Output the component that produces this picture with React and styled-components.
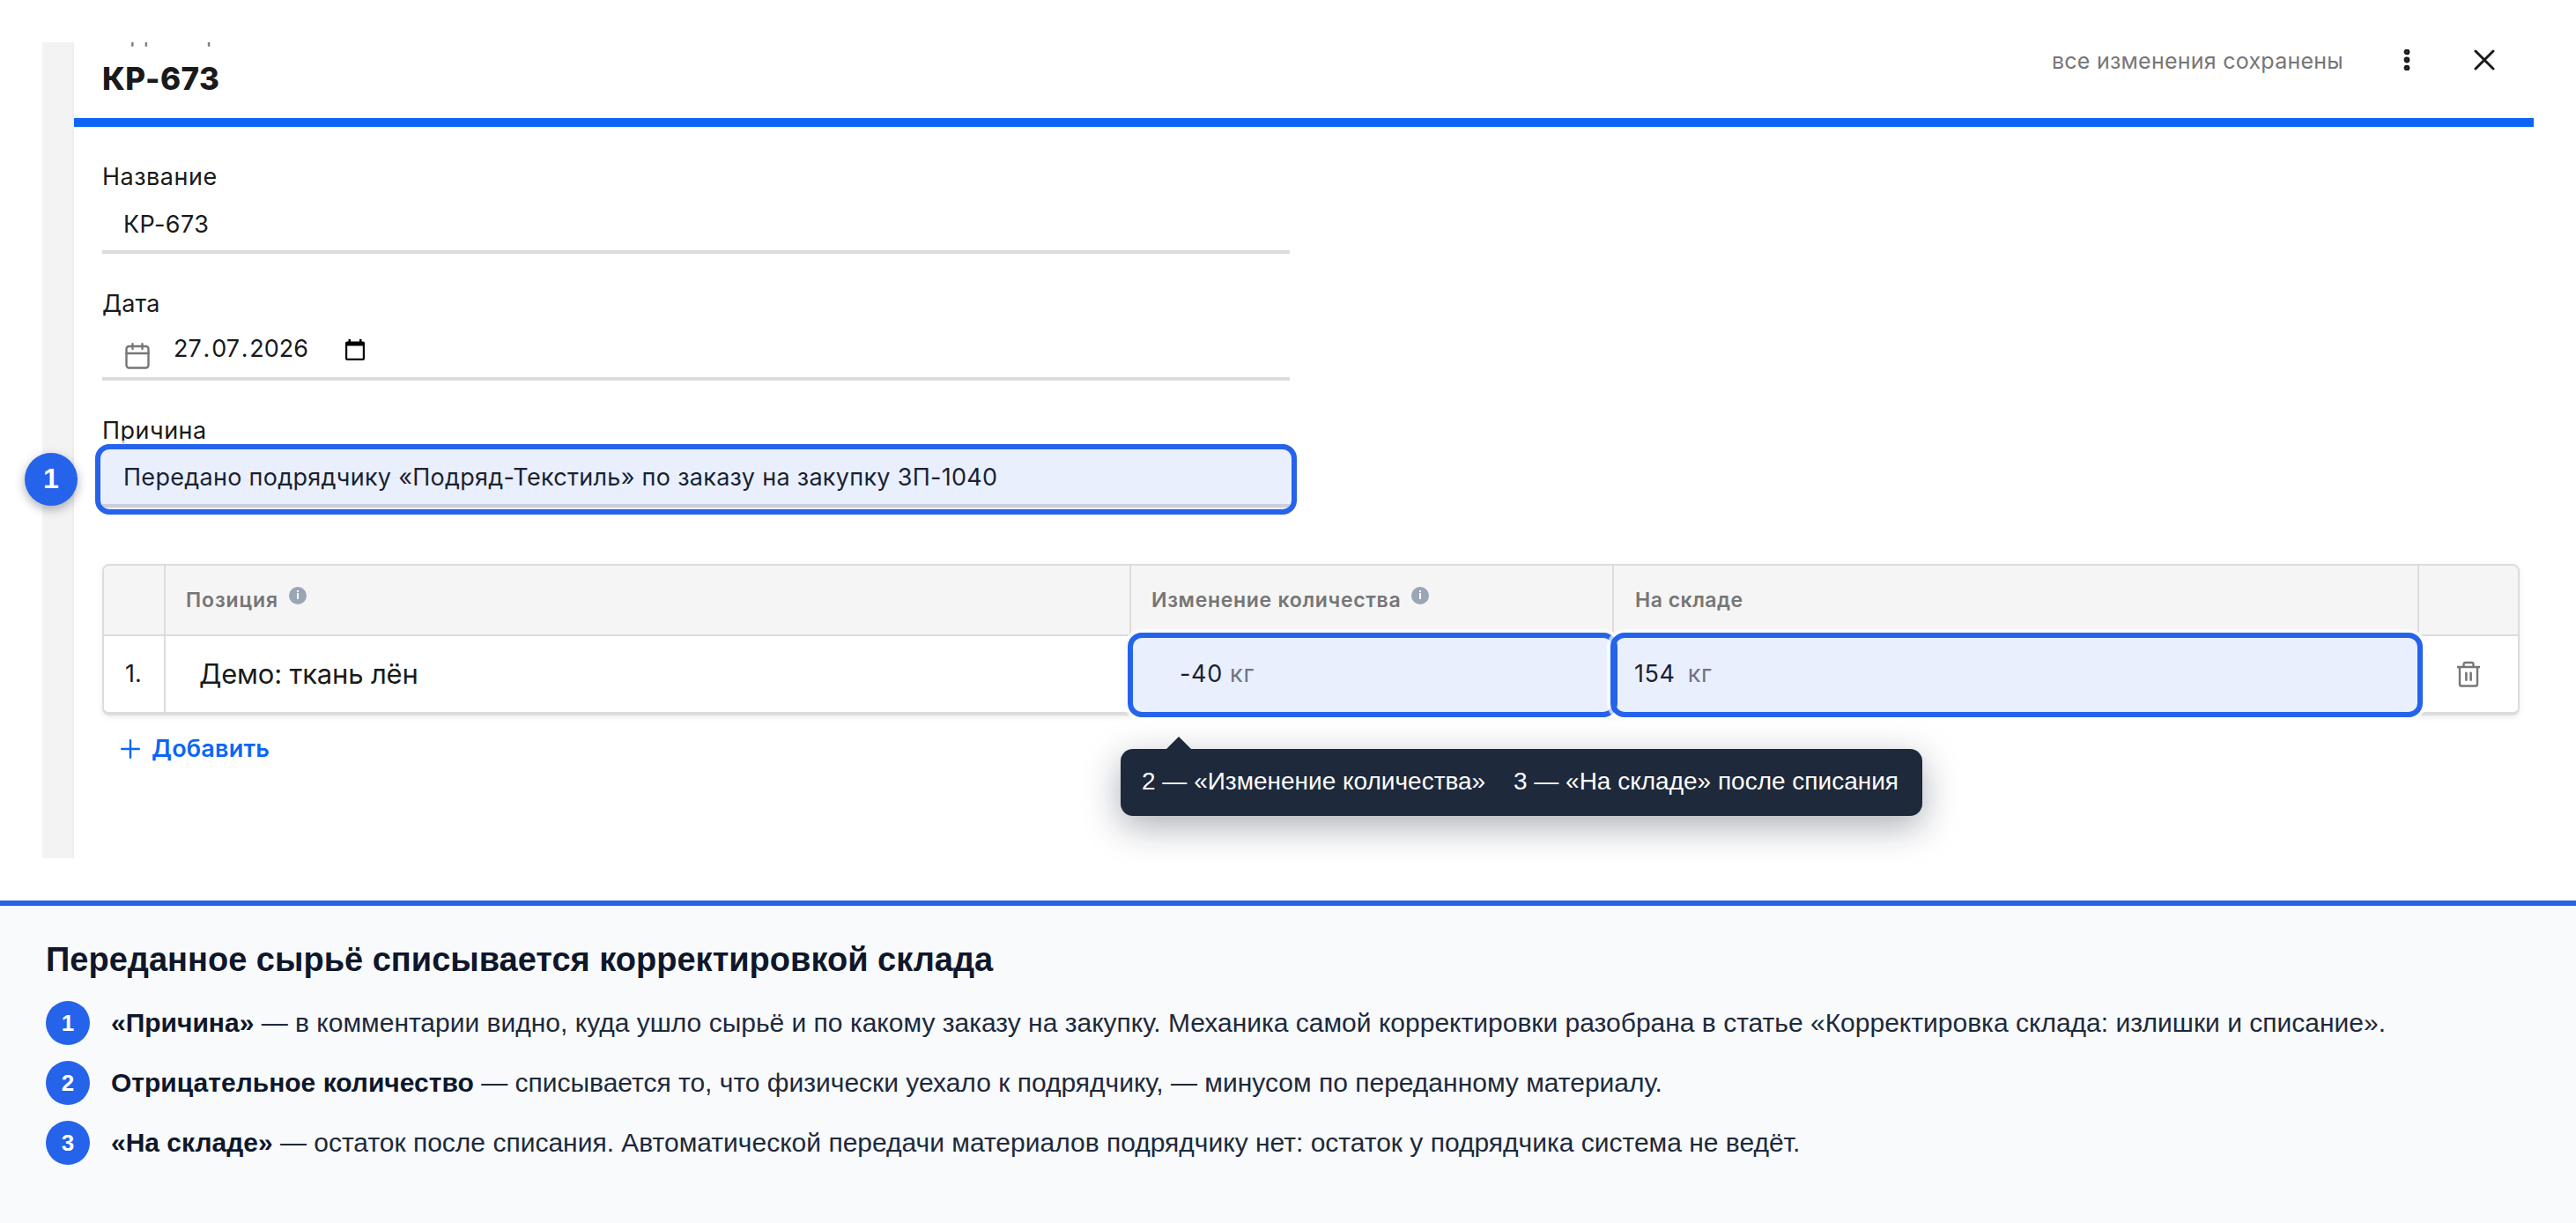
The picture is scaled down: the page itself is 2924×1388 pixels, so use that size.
import styled, { createGlobalStyle } from 'styled-components';

const GlobalStyle = createGlobalStyle`
    * {
        box-sizing: border-box;
    }

    body {
        margin: 0;
        background: #fff;
        font-family: Inter, Roboto, sans-serif;
        color: #1a1a1a;
    }
`;

const Page = styled.div`
    width: 2924px;
    height: 1388px;
    display: flex;
    flex-direction: column;
    overflow: hidden;
`;

const Shot = styled.div`
    height: 1022px;
    flex: none;
    padding: 48px;
`;

const Backdrop = styled.div`
    height: 926px;
    padding-left: 36px;
    background: linear-gradient(to right, #f3f3f3 33px, #ebebeb 36px);
`;

const Panel = styled.div`
    height: 100%;
    background: #fff;
`;

const Header = styled.header`
    height: 96px;
    padding: 0 44px 0 32px;
    display: flex;
    justify-content: space-between;
    align-items: flex-start;
    border-bottom: 10px solid #0b66f5;
    overflow: hidden;
`;

const Kind = styled.div`
    margin-top: -25px;
    font-size: 25px;
    line-height: 32px;
    letter-spacing: 0.2px;
    color: #767676;
`;

const Title = styled.h1`
    margin: 14px 0 0;
    font-size: 35px;
    line-height: 40px;
    font-weight: 800;
    letter-spacing: 0.4px;
`;

const Actions = styled.div`
    height: 42px;
    display: flex;
    align-items: center;
`;

const Status = styled.span`
    margin-right: 62px;
    font-size: 25px;
    letter-spacing: 0.25px;
    color: #767676;
`;

const IconButton = styled.button`
    display: flex;
    margin: -2px 0 0 ${props => props.$gap || 0}px;
    padding: 0;
    border: 0;
    background: none;
    color: inherit;
`;

const Body = styled.div`
    padding: 0 16px 0 32px;
`;

const Field = styled.div`
    width: 1348px;
    height: 144px;
    padding-top: 40px;
`;

const Label = styled.div`
    height: 32px;
    padding-top: 1px;
    font-size: 27px;
    line-height: 32px;
    letter-spacing: ${props => props.$spacing ?? 0.5}px;
`;

const Input = styled.div`
    position: relative;
    height: 72px;
    padding: ${props => props.$top || 22}px 24px 0;
    display: flex;
    align-items: flex-start;
    border-bottom: 4px solid #dcdcdc;
    font-size: 27px;
    line-height: 32px;
    letter-spacing: ${props => props.$spacing || 0}px;
`;

const DateValue = styled.span`
    margin: 0 42px 0 27px;
`;

const DateDot = styled.span`
    margin: 0 1.8px;
`;

const Highlight = styled.div`
    position: absolute;
    inset: ${props => props.$inset};
    border: 6px solid #2563eb;
    border-radius: 16px;
    background: rgba(37, 99, 235, 0.1);
    background-clip: padding-box;
    box-shadow: 0 0 0 4px rgba(255, 255, 255, 0.7);
`;

const Marker = styled.div`
    position: absolute;
    left: -88px;
    top: 10px;
    width: 60px;
    height: 60px;
    padding-bottom: 2px;
    display: flex;
    align-items: center;
    justify-content: center;
    border-radius: 50%;
    background: #2563eb;
    box-shadow: 0 4px 12px rgba(15, 23, 42, 0.35);
    color: #fff;
    font: 700 32px "Liberation Sans", Arial, sans-serif;
`;

const Table = styled.div`
    margin-top: 64px;
    border: 2px solid #dcdcdc;
    border-bottom-width: 4px;
    border-radius: 8px;
    box-shadow: 0 2px 6px rgba(0, 0, 0, 0.08);
`;

const Row = styled.div`
    display: grid;
    grid-template-columns: 70px 1096px 548px 914px 112px;
    height: 86px;
`;

const HeadRow = styled(Row)`
    height: 80px;
    border-bottom: 2px solid #dcdcdc;
    border-radius: 6px 6px 0 0;
    background: #f5f5f5;
    color: #767676;
    font-weight: 600;
`;

const Cell = styled.div`
    position: relative;
    display: flex;
    align-items: center;
    padding: 0 0 2px ${props => props.$left || 0}px;
    border-right: 2px solid #dcdcdc;
    font-size: ${props => props.$size || 27}px;
    letter-spacing: ${props => props.$spacing || 0}px;

    &:last-child {
        border-right: 0;
        justify-content: center;
        padding: 0;
    }
`;

const HeadCell = styled(Cell)`
    padding-bottom: 0;
    font-size: 23px;
`;

const Info = styled.span`
    width: 20px;
    height: 20px;
    margin: -11px 0 0 12px;
    display: flex;
    align-items: center;
    justify-content: center;
    border-radius: 50%;
    background: #9aa5b6;
`;

const Unit = styled.span`
    margin-left: ${props => props.$gap}px;
    letter-spacing: 0.8px;
    color: #767676;
`;

const AddButton = styled.button`
    margin: 22px 0 0 21px;
    padding: 0;
    display: flex;
    align-items: center;
    gap: 13px;
    border: 0;
    background: none;
    color: #0b66f5;
    font: 600 27px/32px Inter, Roboto, sans-serif;
    letter-spacing: 0.2px;
`;

const Tooltip = styled.div`
    position: absolute;
    z-index: 2;
    left: -12px;
    top: 128px;
    width: 910px;
    height: 76px;
    padding: 0 27px 3px 24px;
    display: flex;
    align-items: center;
    justify-content: space-between;
    border-radius: 14px;
    background: #1e293b;
    box-shadow: 0 12px 40px rgba(15, 23, 42, 0.35);
    color: #fff;
    font: 28px "Liberation Sans", Arial, sans-serif;
    letter-spacing: 0;
    white-space: nowrap;

    &::before {
        content: "";
        position: absolute;
        left: 52px;
        top: -14px;
        border: 14px solid transparent;
        border-top: 0;
        border-bottom-color: #1e293b;
    }
`;

const Legend = styled.section`
    flex: 1;
    padding: 38px 52px 0;
    border-top: 6px solid #2563eb;
    background: #f8fafc;
    color: #1e293b;
    font-family: "Liberation Sans", Arial, sans-serif;
`;

const LegendTitle = styled.h2`
    margin: 0 0 24px;
    font-size: 38px;
    line-height: 46px;
    color: #0f172a;
`;

const LegendItem = styled.div`
    height: 50px;
    margin-bottom: 18px;
    display: flex;
    align-items: center;
    gap: 24px;
    font-size: 30px;
    white-space: nowrap;

    b {
        color: #0f172a;
    }
`;

const LegendNumber = styled.span`
    width: 50px;
    height: 50px;
    display: flex;
    align-items: center;
    justify-content: center;
    border-radius: 50%;
    background: #2563eb;
    color: #fff;
    font-size: 26px;
    font-weight: 700;
`;

const DotsIcon = () => (
    <svg width="20" height="24" viewBox="0 0 20 24" fill="#777" stroke="currentColor" strokeWidth="2.8">
        <circle cx="10" cy="2.9" r="2" />
        <circle cx="10" cy="12" r="2" />
        <circle cx="10" cy="21.1" r="2" />
    </svg>
);

const CloseIcon = () => (
    <svg width="24" height="24" viewBox="0 0 24 24" stroke="currentColor" strokeWidth="3" strokeLinecap="round">
        <path d="M2 2L22 22M22 2L2 22" />
    </svg>
);

const CalendarIcon = styled(({ className }) => (
    <svg className={className} width="28" height="30" viewBox="0 0 28 30" fill="none" stroke="#767676" strokeWidth="2.4" strokeLinecap="round">
        <rect x="1.5" y="4" width="25" height="24.5" rx="3" />
        <path d="M1.5 12H26.5M8.5 1.2V7M19.5 1.2V7" />
    </svg>
))`
    margin: 9px 0 0 2px;
`;

const PickerIcon = styled(({ className }) => (
    <svg className={className} width="22" height="24" viewBox="0 0 22 24">
        <path fill="#000" fillRule="evenodd" d="M3.5 0H6V2.4H16V0H18.5V2.4H20Q22 2.4 22 4.4V22Q22 24 20 24H2Q0 24 0 22V4.4Q0 2.4 2 2.4H3.5ZM2.2 7.4V21.8H19.8V7.4Z" />
    </svg>
))`
    margin-top: 5px;
`;

const TrashIcon = () => (
    <svg width="28" height="32" viewBox="0 0 28 32" fill="none" stroke="#767676" strokeWidth="2.4">
        <path d="M1 8H27M4 8V27.5Q4 29.5 6 29.5H22Q24 29.5 24 27.5V8" />
        <path d="M8.5 8V5Q8.5 3 10.5 3H17.5Q19.5 3 19.5 5V8" />
        <path strokeWidth="2.6" strokeLinecap="round" d="M11.4 14.8V22.8M16.6 14.8V22.8" />
    </svg>
);

const PlusIcon = () => (
    <svg width="22" height="22" viewBox="0 0 22 22" stroke="currentColor" strokeWidth="2.4" strokeLinecap="round">
        <path d="M11 1.2V20.8M1.2 11H20.8" />
    </svg>
);

const InfoMark = () => (
    <Info>
        <svg width="4" height="12" viewBox="0 0 4 12" fill="#fff">
            <rect x="1" y="0" width="2" height="2" />
            <rect x="1" y="3" width="2" height="7" />
        </svg>
    </Info>
);

const legend = [
    ['«Причина»', 'в комментарии видно, куда ушло сырьё и по какому заказу на закупку. Механика самой корректировки разобрана в статье «Корректировка склада: излишки и списание».'],
    ['Отрицательное количество', 'списывается то, что физически уехало к подрядчику, — минусом по переданному материалу.'],
    ['«На складе»', 'остаток после списания. Автоматической передачи материалов подрядчику нет: остаток у подрядчика система не ведёт.'],
];

const App = () => (
    <Page>
        <GlobalStyle />
        <Shot>
            <Backdrop>
                <Panel>
                    <Header>
                        <div>
                            <Kind>Корректировка</Kind>
                            <Title>КР-673</Title>
                        </div>
                        <Actions>
                            <Status>все изменения сохранены</Status>
                            <IconButton><DotsIcon /></IconButton>
                            <IconButton $gap={66}><CloseIcon /></IconButton>
                        </Actions>
                    </Header>
                    <Body>
                        <Field>
                            <Label>Название</Label>
                            <Input $top={23} $spacing={0.4}>КР-673</Input>
                        </Field>
                        <Field>
                            <Label $spacing={0.1}>Дата</Label>
                            <Input $top={20}>
                                <CalendarIcon />
                                <DateValue>27<DateDot>.</DateDot>07<DateDot>.</DateDot>2026</DateValue>
                                <PickerIcon />
                            </Input>
                        </Field>
                        <Field>
                            <Label>Причина</Label>
                            <Input $spacing={0.29}>
                                Передано подрядчику «Подряд-Текстиль» по заказу на закупку ЗП-1040
                                <Highlight $inset="0 -8px -12px" />
                                <Marker>1</Marker>
                            </Input>
                        </Field>
                        <Table>
                            <HeadRow>
                                <HeadCell />
                                <HeadCell $left={23} $spacing={0.9}>Позиция<InfoMark /></HeadCell>
                                <HeadCell $left={23} $spacing={0.7}>Изменение количества<InfoMark /></HeadCell>
                                <HeadCell $left={24} $spacing={0.5}>На складе</HeadCell>
                                <HeadCell />
                            </HeadRow>
                            <Row>
                                <Cell $left={24}>1.</Cell>
                                <Cell $left={38} $size={31} $spacing={-0.18}>Демо: ткань лён</Cell>
                                <Cell $left={55} $spacing={0.7}>
                                    -40<Unit $gap={8}>кг</Unit>
                                    <Highlight $inset="-4px -6px -6px -4px" />
                                    <Tooltip>
                                        <span>2 — «Изменение количества»</span>
                                        <span>3 — «На складе» после списания</span>
                                    </Tooltip>
                                </Cell>
                                <Cell $left={23} $spacing={0.6}>
                                    154<Unit $gap={14}>кг</Unit>
                                    <Highlight $inset="-4px -6px -6px -4px" />
                                </Cell>
                                <Cell><TrashIcon /></Cell>
                            </Row>
                        </Table>
                        <AddButton><PlusIcon />Добавить</AddButton>
                    </Body>
                </Panel>
            </Backdrop>
        </Shot>
        <Legend>
            <LegendTitle>Переданное сырьё списывается корректировкой склада</LegendTitle>
            {legend.map(([name, text], i) => (
                <LegendItem key={name}>
                    <LegendNumber>{i + 1}</LegendNumber>
                    <span><b>{name}</b> — {text}</span>
                </LegendItem>
            ))}
        </Legend>
    </Page>
);

export default App;
